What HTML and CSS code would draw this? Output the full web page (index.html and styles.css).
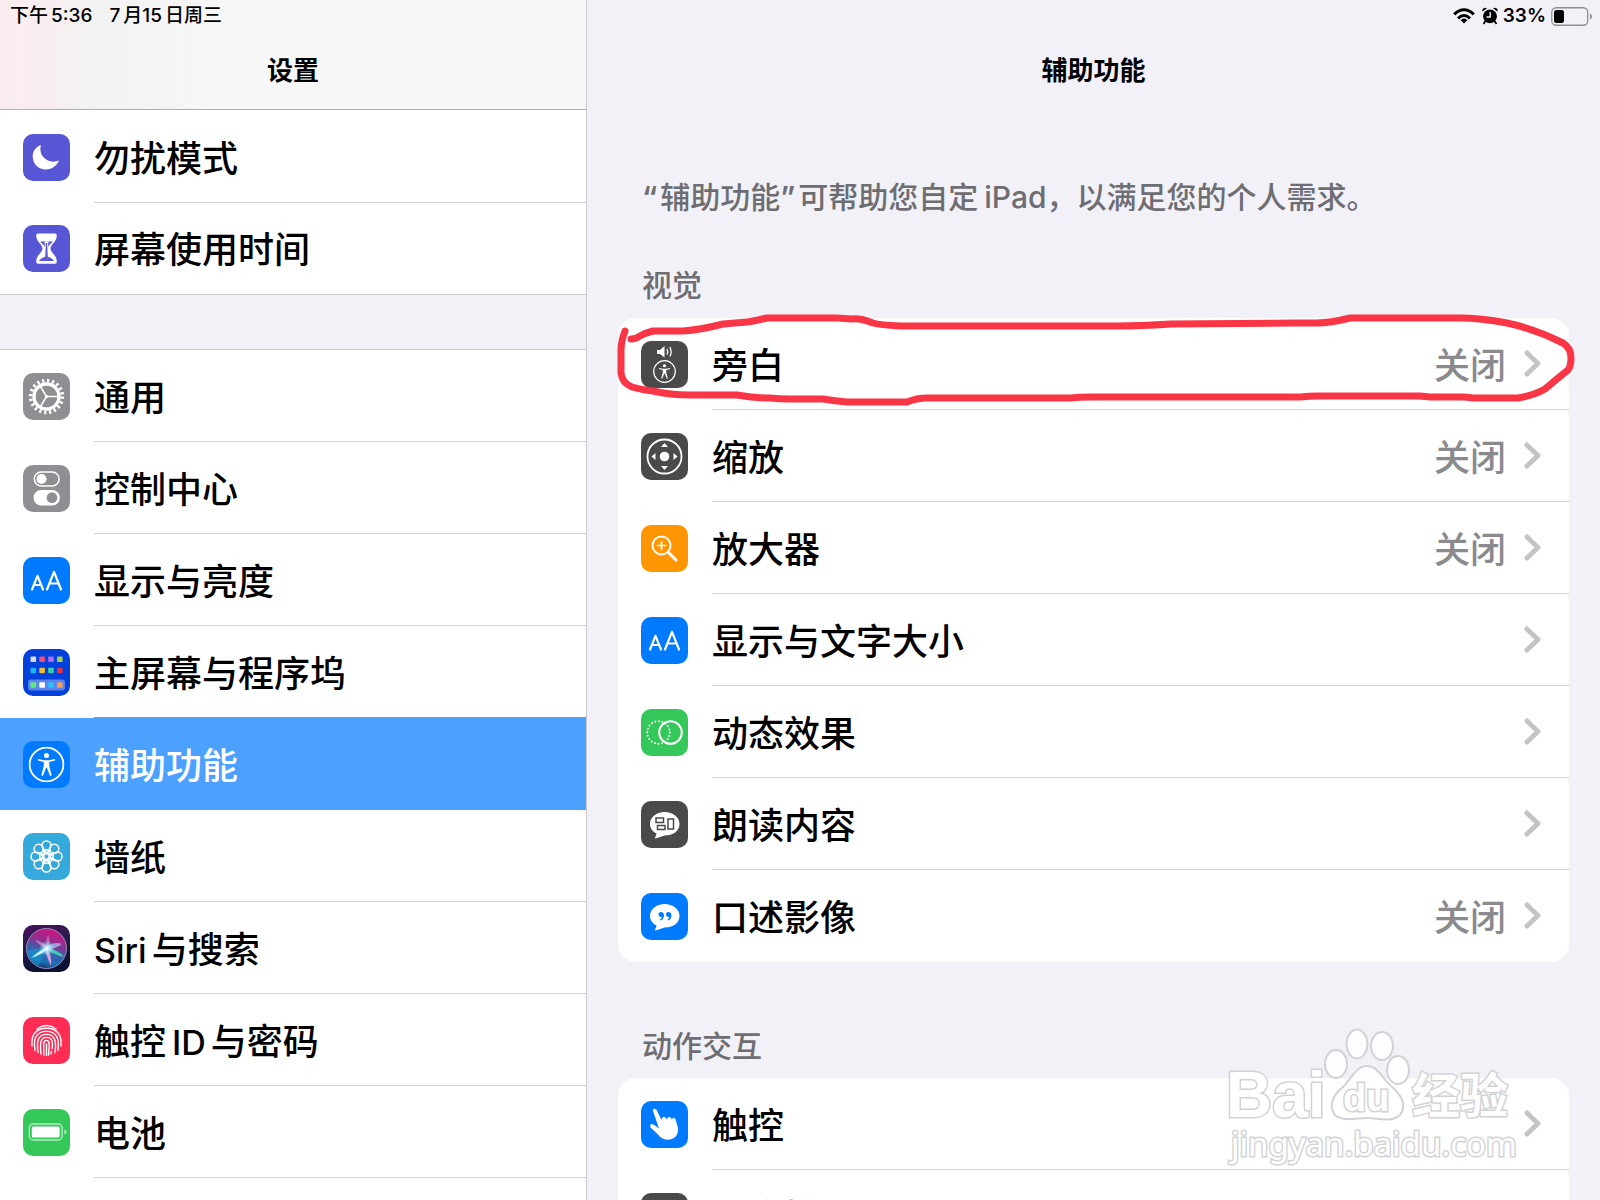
FILE: index.html
```html
<!DOCTYPE html>
<html lang="zh-CN">
<head>
<meta charset="utf-8">
<meta name="viewport" content="width=device-width, initial-scale=1">
<title>设置 - 辅助功能</title>
<link rel="stylesheet" href="styles.css">
</head>
<body>
<svg class="defs" aria-hidden="true">
  <defs>
    <symbol id="chevron" viewBox="0 0 17 27"><path d="M3 3 L14 13.500 L3 24" fill="none" stroke="currentColor" stroke-width="5" stroke-linecap="round" stroke-linejoin="round"/></symbol>
    <symbol id="person" viewBox="0 0 36 36">
      <circle cx="18" cy="18" r="16.900" fill="none" stroke="#fff" stroke-width="1.900"/>
      <circle cx="18" cy="9" r="2.500" fill="#fff"/>
      <path d="M9.500 12.600 L15.500 13.800 H20.500 L26.500 12.600 L26.700 14 L20.700 15.600 V19.500 L23.200 28.800 L21.600 29.400 L18.400 21.200 H17.600 L14.400 29.400 L12.800 28.800 L15.300 19.500 V15.600 L9.300 14 Z" fill="#fff"/>
    </symbol>
    <symbol id="aa" viewBox="0 0 47 47">
      <g fill="none" stroke="#fff" stroke-width="2.200" stroke-linecap="round" stroke-linejoin="round">
        <path d="M9 32.500 L14.500 18.800 L20 32.500 M11 28 H18"/>
        <path d="M24 32.500 L31 14.800 L38 32.500 M26.300 26.500 H35.700"/>
      </g>
    </symbol>
    <linearGradient id="siriBase" x1="0" y1="0" x2="0.300" y2="1"><stop offset="0" stop-color="#4a0f5e"/><stop offset="0.500" stop-color="#261c4c"/><stop offset="1" stop-color="#0b1230"/></linearGradient>
    <linearGradient id="siriOrb" x1="0.600" y1="0" x2="0.300" y2="1"><stop offset="0" stop-color="#d3137f"/><stop offset="0.350" stop-color="#8a3190"/><stop offset="0.550" stop-color="#3b5fa8"/><stop offset="0.800" stop-color="#1c6fb4"/><stop offset="1" stop-color="#152a5c"/></linearGradient>
    <radialGradient id="siriGlow"><stop offset="0" stop-color="#fff"/><stop offset="0.400" stop-color="#bff4ff" stop-opacity="0.700"/><stop offset="1" stop-color="#7fe0ff" stop-opacity="0"/></radialGradient>
  </defs>
</svg>

<div class="screen">
  <aside class="sidebar">
    <header class="bar bar-side">
      <div class="status"><span>下午<span class="digits">5:36</span></span><span>7<span class="digits">月</span>15<span class="digits">日周三</span></span></div>
      <h1 class="title">设置</h1>
    </header>
    <nav>
      <div class="group">
        <a class="row" href="#dnd">
          <svg class="icon indigo" viewBox="0 0 47 47"><path d="M18.500 11 C13 13 9.800 17.500 10.300 23.500 C10.800 30.500 16.500 35.800 23.500 35.500 C29.500 35.300 34.500 31.500 36.500 26.500 C33 28 28.500 28.300 24.500 26 C18.500 22.500 16.800 16.500 18.500 11 Z" transform="translate(-0.500 0)" fill="#fff"/></svg>
          <span class="cell"><span class="name">勿扰模式</span></span>
        </a>
        <a class="row" href="#screentime">
          <svg class="icon indigo" viewBox="0 0 47 47"><path d="M15 8.500 H32 Q34 8.500 33.800 11 C33.500 17 27.500 19.500 27.500 23.500 C27.500 27.500 33.500 30 33.800 36 Q34 38.700 32 38.700 H15 Q13 38.700 13.200 36 C13.500 30 19.500 27.500 19.500 23.500 C19.500 19.500 13.500 17 13.200 11 Q13 8.500 15 8.500 Z" fill="#fff"/><path d="M17.200 16.500 H29.800 C28 19 24.600 21 24.600 23.500 V31.500 C26.500 32.500 30 33.500 30.800 36 H16.200 C17 33.500 20.500 32.500 22.400 31.500 V23.500 C22.400 21 19 19 17.200 16.500 Z" fill="#5756d5"/><path d="M21.500 16.500 H25.500 L23.500 34.500 Z" fill="#fff"/><path d="M23.500 18 V33" stroke="#5756d5" stroke-width="1.500"/></svg>
          <span class="cell"><span class="name">屏幕使用时间</span></span>
        </a>
      </div>
      <div class="group">
        <a class="row" href="#general">
          <svg class="icon gray" viewBox="0 0 47 47">
            <circle cx="23.500" cy="23.500" r="15.900" fill="none" stroke="#fff" stroke-width="3.600" stroke-dasharray="2.300 2.695"/>
            <circle cx="23.500" cy="23.500" r="12.500" fill="none" stroke="#fff" stroke-width="3.400"/>
            <path d="M23.500 23.500 H35 M23.500 23.500 L17.500 13.500 M23.500 23.500 L17.500 33.500" stroke="#fff" stroke-width="1.500"/>
            <circle cx="23.500" cy="23.500" r="1.800" fill="#fff"/>
          </svg>
          <span class="cell"><span class="name">通用</span></span>
        </a>
        <a class="row" href="#control">
          <svg class="icon gray" viewBox="0 0 47 47"><rect x="11.300" y="7" width="24.800" height="14" rx="7" fill="none" stroke="#fff" stroke-width="1.500"/><circle cx="18.500" cy="14" r="5" fill="#fff"/><rect x="10.500" y="25" width="26.400" height="15.500" rx="7.750" fill="#fff"/><circle cx="29" cy="32.700" r="5.400" fill="#8e8e93"/></svg>
          <span class="cell"><span class="name">控制中心</span></span>
        </a>
        <a class="row" href="#display">
          <svg class="icon blue"><use href="#aa"/></svg>
          <span class="cell"><span class="name">显示与亮度</span></span>
        </a>
        <a class="row" href="#home">
          <svg class="icon home" viewBox="0 0 47 47">
            <rect x="5" y="30.500" width="37" height="11" rx="3" fill="#5b84e8"/>
            <g><rect x="7.500" y="7.500" width="5.600" height="5.600" rx="1" fill="#d8dbe6"/><rect x="16.300" y="7.500" width="5.600" height="5.600" rx="1" fill="#ef5176"/><rect x="25.200" y="7.500" width="5.600" height="5.600" rx="1" fill="#b26bff"/><rect x="34" y="7.500" width="5.600" height="5.600" rx="1" fill="#a5d24e"/>
            <rect x="7.500" y="18.700" width="5.600" height="5.600" rx="1" fill="#1cb4ff"/><rect x="16.300" y="18.700" width="5.600" height="5.600" rx="1" fill="#f5b92b"/><rect x="25.200" y="18.700" width="5.600" height="5.600" rx="1" fill="#35cfa6"/><rect x="34" y="18.700" width="5.600" height="5.600" rx="1" fill="#e8323c"/>
            <rect x="7.500" y="33.200" width="5.600" height="5.600" rx="1" fill="#62ea7c"/><rect x="16.300" y="33.200" width="5.600" height="5.600" rx="1" fill="#fff"/><rect x="25.200" y="33.200" width="5.600" height="5.600" rx="1" fill="#2ac4fb"/><rect x="34" y="33.200" width="5.600" height="5.600" rx="1" fill="#f99b55"/></g>
          </svg>
          <span class="cell"><span class="name">主屏幕与程序坞</span></span>
        </a>
        <a class="row selected" href="#accessibility" aria-current="page">
          <svg class="icon blue" viewBox="0 0 47 47"><use href="#person" x="5.500" y="5.500" width="36" height="36"/></svg>
          <span class="cell"><span class="name">辅助功能</span></span>
        </a>
        <a class="row" href="#wallpaper">
          <svg class="icon sky" viewBox="0 0 47 47"><g fill="none" stroke="#fff" stroke-width="1.500">
            <circle cx="23.500" cy="12.500" r="4.500"/><circle cx="31.300" cy="15.700" r="4.500"/><circle cx="34.500" cy="23.500" r="4.500"/><circle cx="31.300" cy="31.300" r="4.500"/><circle cx="23.500" cy="34.500" r="4.500"/><circle cx="15.700" cy="31.300" r="4.500"/><circle cx="12.500" cy="23.500" r="4.500"/><circle cx="15.700" cy="15.700" r="4.500"/>
            <circle cx="23.500" cy="23.500" r="3"/>
            <path d="M20 15.500 L23.500 20.500 L27 15.500 M31.700 20 L25.600 21.400 L26.800 15.500 M31.700 27 L26.500 23.500 L31.700 20 M27 31.500 L25.600 25.600 L31.700 27 M20 31.500 L23.500 26.500 L27 31.500 M15.300 27 L21.400 25.600 L20 31.500 M15.300 20 L20.500 23.500 L15.300 27 M20 15.500 L21.400 21.400 L15.300 20"/>
          </g></svg>
          <span class="cell"><span class="name">墙纸</span></span>
        </a>
        <a class="row" href="#siri">
          <svg class="icon" viewBox="0 0 47 47">
            <rect width="47" height="47" fill="url(#siriBase)"/>
            <circle cx="23.500" cy="23.500" r="20" fill="url(#siriOrb)" stroke="#9a8db8" stroke-width="1"/>
            <path d="M23 23 L4.500 25 Q6 38 16 41 Z" fill="#1599d6" opacity="0.600"/>
            <path d="M12 15 Q20 16 25 23 Q17 22 12 15 Z" fill="#e79ad8" opacity="0.600"/>
            <path d="M25 10 Q28 16 25 24 Q22 17 25 10 Z" fill="#f3a6d4" opacity="0.500"/>
            <path d="M22 23 Q31 16 39 19 Q33 24 24 24 Z" fill="#a9c7ee" opacity="0.700"/>
            <path d="M24 23 Q36 25 41 32 Q31 30 24 24 Z" fill="#43e0b4" opacity="0.800"/>
            <path d="M24 23 Q29 31 28 41 Q24 33 22 24 Z" fill="#f3a3ea" opacity="0.900"/>
            <path d="M24 22 Q17 25 8 33 Q18 30 25 24 Z" fill="#c4f7ff"/>
            <circle cx="24" cy="23.500" r="8" fill="url(#siriGlow)"/>
          </svg>
          <span class="cell"><span class="name"><span class="latin">Siri</span>与搜索</span></span>
        </a>
        <a class="row" href="#touchid">
          <svg class="icon pink" viewBox="0 0 47 47"><g fill="none" stroke="#fff" stroke-width="1.400" stroke-linecap="round">
            <path d="M14 12 Q23.500 5 33 12"/>
            <path d="M9 29 C8 19 12 11.300 23.500 11.300 C35 11.300 39 19 38 29"/>
            <path d="M12 33.500 C10 22 13 14.400 23.500 14.400 C34 14.400 36.500 22 35 33.500"/>
            <path d="M15 35.500 C13 23 16 17.400 23.500 17.400 C31 17.400 34 23 32 35.500"/>
            <path d="M18 37 C16.500 25 18 20.400 23.500 20.400 C29 20.400 30.500 25 29 31.500 M28.500 34.500 L28 37"/>
            <path d="M21 38 C20.500 27 20 23.400 23.500 23.400 C27 23.400 26.500 28 25.500 38"/>
            <path d="M23.500 27 V38.500"/>
          </g></svg>
          <span class="cell"><span class="name">触控<span class="latin latin-mid">ID</span>与密码</span></span>
        </a>
        <a class="row" href="#battery">
          <svg class="icon green" viewBox="0 0 47 47"><rect x="6.300" y="15" width="32.800" height="16" rx="4" fill="none" stroke="#fff" stroke-opacity="0.650" stroke-width="1.400"/><rect x="8.800" y="17.500" width="27.800" height="11" rx="1.500" fill="#fff"/><path d="M41.500 20.500 Q43.500 21 43.500 23 Q43.500 25 41.500 25.500 Z" fill="#fff" fill-opacity="0.700"/></svg>
          <span class="cell"><span class="name">电池</span></span>
        </a>
      </div>
    </nav>
  </aside>

  <main class="detail">
    <header class="bar">
      <div class="status status-end">
        <svg class="wifi" viewBox="0 0 22 16" role="img" aria-label="无线局域网"><g fill="none" stroke="#000" stroke-width="3"><path d="M1.200 6.300 Q11 -2.700 20.800 6.300"/><path d="M5 10.300 Q11 4.800 17 10.300"/></g><path d="M7.600 12 Q11 9 14.400 12 L11 15.600 Z"/></svg>
        <svg class="alarm" viewBox="0 0 16 18" role="img" aria-label="闹钟"><circle cx="8" cy="9.300" r="6.900"/><path d="M.500 4.600 A3 3 0 0 1 5 1.200 Z M15.500 4.600 A3 3 0 0 0 11 1.200 Z"/><path d="M3.500 14 L1.500 17 M12.500 14 L14.500 17" stroke="#000" stroke-width="1.800"/><path d="M8.200 5 V10 H4.500" fill="none" stroke="#f2f1f8" stroke-width="1.400"/></svg>
        <span>33%</span>
        <svg class="battery" viewBox="0 0 41 19" role="img" aria-label="电池电量"><rect x=".750" y=".750" width="36" height="17.500" rx="4.500" fill="none" stroke="#8f8e94" stroke-width="1.300"/><rect x="3" y="3" width="10" height="13" rx="2.500"/><path d="M39 6.500 Q41 7.500 41 9.500 Q41 11.500 39 12.500 Z" fill="#8f8e94"/></svg>
      </div>
      <h2 class="title">辅助功能</h2>
    </header>

    <p class="intro"><span class="quote">“</span>辅助功能<span class="quote">”</span>可帮助您自定<span class="latin-mid">iPad</span>，以满足您的个人需求。</p>

    <section>
      <h3 class="caption">视觉</h3>
      <div class="card">
        <a class="row" href="#voiceover">
          <svg class="icon dark" viewBox="0 0 47 47"><path d="M16 9 H19 L23.500 5 V16.500 L19 13 H16 Z" fill="#fff"/><path d="M26 8 Q27.500 10.700 26 13.500 M28.800 6 Q31.500 10.700 28.800 15.500" fill="none" stroke="#fff" stroke-width="1.300"/><use href="#person" x="12" y="19" width="23" height="23"/></svg>
          <span class="cell"><span class="name">旁白</span><span class="value">关闭</span><svg class="chevron"><use href="#chevron"/></svg></span>
        </a>
        <a class="row" href="#zoom">
          <svg class="icon dark" viewBox="0 0 47 47"><circle cx="23.500" cy="23.500" r="17" fill="none" stroke="#fff" stroke-width="1.800"/><circle cx="23.500" cy="23.500" r="4.800" fill="#fff"/><path d="M23.500 10 L27 14 H20 Z M23.500 37 L27 33 H20 Z M10.500 23.500 L14.500 20 V27 Z M36.500 23.500 L32.500 20 V27 Z" fill="#fff"/></svg>
          <span class="cell"><span class="name">缩放</span><span class="value">关闭</span><svg class="chevron"><use href="#chevron"/></svg></span>
        </a>
        <a class="row" href="#magnifier">
          <svg class="icon orange" viewBox="0 0 47 47"><g fill="none" stroke="#fff" stroke-linecap="round"><circle cx="20.500" cy="20.500" r="9" stroke-width="2"/><path d="M20.500 16.500 V24.500 M16.500 20.500 H24.500" stroke-width="1.700"/><path d="M27.500 27.500 L35 35" stroke-width="3"/></g></svg>
          <span class="cell"><span class="name">放大器</span><span class="value">关闭</span><svg class="chevron"><use href="#chevron"/></svg></span>
        </a>
        <a class="row" href="#text">
          <svg class="icon blue"><use href="#aa"/></svg>
          <span class="cell"><span class="name">显示与文字大小</span><svg class="chevron"><use href="#chevron"/></svg></span>
        </a>
        <a class="row" href="#motion">
          <svg class="icon green" viewBox="0 0 47 47"><g fill="none" stroke="#fff"><circle cx="17.500" cy="23.500" r="11.300" stroke-width="2" stroke-dasharray="0.010 3.540" stroke-linecap="round"/><circle cx="29.500" cy="23.500" r="11.300" stroke-width="2"/></g></svg>
          <span class="cell"><span class="name">动态效果</span><svg class="chevron"><use href="#chevron"/></svg></span>
        </a>
        <a class="row" href="#spoken">
          <svg class="icon dark" viewBox="0 0 47 47"><path d="M23.500 11 C32 11 38.500 16 38.500 23 C38.500 30 32 34.500 23.500 34.500 Q18 36.500 14.500 37.500 Q13.300 37 14.500 35.500 Q15.500 34 15.500 32.500 C11.500 30.500 9 27 9 23 C9 16 15.500 11 23.500 11 Z" fill="#fff"/><path d="M15 17 H22.500 V21.500 H15 Z M16.500 24.500 H24 V28.500 H16.500 Z M27 18 H32.500 V28 H27 Z" fill="none" stroke="#4a4a4a" stroke-width="1.500"/></svg>
          <span class="cell"><span class="name">朗读内容</span><svg class="chevron"><use href="#chevron"/></svg></span>
        </a>
        <a class="row" href="#description">
          <svg class="icon blue" viewBox="0 0 47 47"><path d="M23.500 11 C32 11 38.500 16 38.500 23 C38.500 30 32 34.500 23.500 34.500 Q18 36.500 14.500 37.500 Q13.300 37 14.500 35.500 Q15.500 34 15.500 32.500 C11.500 30.500 9 27 9 23 C9 16 15.500 11 23.500 11 Z" fill="#fff"/><path d="M23 22 C23 18.500 17.500 18 17.500 21.500 C17.500 23.500 19.500 24.300 21 23.700 Q20.800 25.500 19 26.500 L19.500 27.500 Q23 26.300 23 22 Z M30.500 22 C30.500 18.500 25 18 25 21.500 C25 23.500 27 24.300 28.500 23.700 Q28.300 25.500 26.500 26.500 L27 27.500 Q30.500 26.300 30.500 22 Z" fill="#007aff"/></svg>
          <span class="cell"><span class="name">口述影像</span><span class="value">关闭</span><svg class="chevron"><use href="#chevron"/></svg></span>
        </a>
        <svg class="marker" viewBox="618 318 951 92" preserveAspectRatio="none" aria-hidden="true"><path d="M625 331 Q621 341 621 351 V373 Q622 383 632 387 Q642 390 653 391 Q670 395 690 395 H737 Q755 398 770 398 Q780 399 790 399 H823 Q835 401 847 402 H907 Q917 398 927 398 H1070 Q1080 397 1090 397 H1300 Q1310 396 1317 396 H1420 L1430 397 H1465 L1473 398 H1518 Q1535 395 1545 389 Q1558 378 1568 370 Q1571 366 1571 358 Q1571 348 1563 343 Q1535 329 1507 323 Q1480 318 1460 318 H1350 Q1330 323 1317 323 H1295 L1171 324 Q1140 326 1117 326 H900 Q880 325 873 323 Q860 318 852 319 L837 318 H767 Q750 322 747 322 L723 324 Q700 330 683 331 H653 Q645 333 640 336 Q636 339 631 339"/></svg>
      </div>
    </section>

    <section>
      <h3 class="caption">动作交互</h3>
      <div class="card">
        <a class="row" href="#touch">
          <svg class="icon blue" viewBox="0 0 47 47"><path d="M12 10 Q11.500 7.500 13.800 7.700 Q15.500 8 16.300 10.500 L20.500 19 Q20.800 15.500 23.500 16 Q26 16.500 25.800 19.500 Q26.300 15.500 29 16 Q31 16.500 30.800 19.500 Q31 16.500 33 16.800 Q35 17.500 35.300 21 L37 27 Q37.500 34 33 37 Q28 40 22.500 38 Q19 36.500 16 32.500 L9.500 26.500 Q8.500 24 10.500 23 Q12 22.800 14 24.500 L18 27.500 Z" fill="#fff"/></svg>
          <span class="cell"><span class="name">触控</span><svg class="chevron"><use href="#chevron"/></svg></span>
        </a>
        <a class="row" href="#switch">
          <svg class="icon dark" viewBox="0 0 47 47"><rect x="8" y="12" width="13" height="22" rx="2" fill="#fff"/><rect x="25" y="12" width="13" height="22" rx="2" fill="#fff"/></svg>
          <span class="cell"><span class="name">切换控制</span><svg class="chevron"><use href="#chevron"/></svg></span>
        </a>
      </div>
    </section>
  </main>

  <svg class="watermark" viewBox="0 0 300 150" role="img" aria-label="Baidu 经验 jingyan.baidu.com">
    <g class="wm-shape">
      <ellipse cx="108" cy="34" rx="11" ry="14"/>
      <ellipse cx="129" cy="14" rx="10.500" ry="14.500"/>
      <ellipse cx="154" cy="16" rx="11" ry="14"/>
      <ellipse cx="170" cy="40" rx="11" ry="14"/>
      <path d="M139 36 C150 36 154 48 163 56 C174 65 179 76 172 85 C163 93 150 88 139 88 C128 88 115 92 107 85 C100 76 105 65 115 57 C124 48 128 36 139 36 Z"/>
    </g>
    <text class="wm-bai" x="-2" y="87">Bai</text>
    <text class="wm-du" x="115" y="81">du</text>
    <text class="wm-cjk" x="184" y="83">经验</text>
    <text class="wm-url" x="3" y="126">jingyan.baidu.com</text>
  </svg>
</div>
</body>
</html>
```
FILE: styles.css
```css
* { box-sizing: border-box; }

body {
  margin: 0;
  background: #f2f1f8;
  color: #000;
  font-family: Inter, "Noto Sans CJK SC", sans-serif;
  font-size: 36px;
  font-weight: 500;
}

a { color: inherit; text-decoration: none; }
h1, h2, h3, p { margin: 0; }

.defs { position: absolute; width: 0; height: 0; }

.screen {
  position: relative;
  display: grid;
  grid-template-columns: minmax(0, 587fr) minmax(0, 1013fr);
  height: 100vh;
  overflow: hidden;
}

.sidebar {
  background: #fff;
  border-right: 1px solid #c9c8cd;
  overflow: hidden;
}

.detail { overflow: hidden; }

/* Top bars */
.bar { height: 110px; }

.bar-side {
  background: linear-gradient(90deg, #fbedef 0, #f8eeef 50px, #f3f2f2 90px, #f4f4f4 140px, #f7f7f7 220px);
  border-bottom: 1px solid #b0b0b2;
}

.status {
  display: flex;
  align-items: center;
  gap: 17px;
  height: 32px;
  padding: 0 10px;
  font-size: 19px;
  font-weight: 600;
  line-height: 26px;
}

.status:not(.status-end) { font-weight: 500; }
.digits { margin-left: 3px; }
.status-end { justify-content: flex-end; gap: 5px; padding-right: 8px; }
.wifi { width: 22px; height: 16px; margin-right: 2px; }
.alarm { width: 16px; height: 18px; }
.battery { width: 41px; height: 19px; }

.title {
  font-size: 26px;
  font-weight: 600;
  line-height: 40px;
  padding-top: 19px;
  text-align: center;
}

/* Rows */
.group { padding-top: 1px; }

.group + .group {
  border-top: 54px solid #f2f1f8;
  box-shadow: inset 0 1px 0 #c9c8cd;
}

.row {
  display: flex;
  align-items: center;
  gap: 24px;
  height: 92px;
  padding-left: 23px;
}

.cell {
  flex: 1;
  display: flex;
  align-items: center;
  height: 92px;
  border-bottom: 1px solid #d3d3d5;
}

.name { flex: 1; white-space: nowrap; }
.name, .value { padding-bottom: 2px; }
.group:first-child .row:last-child { border-bottom: 1px solid #c9c8cd; }
.group:first-child .row:last-child .cell,
.card .row:nth-of-type(7) .cell { border-bottom-color: transparent; }

.selected { background: #4ca1ff; color: #fff; }
.selected .cell { border-bottom-color: transparent; }
.row:has(+ .selected) .cell { border-bottom-color: #4ca1ff; }

.latin { margin-right: 5px; font-size: 34px; }
.latin-mid { margin-left: 6px; }

.icon { flex: none; width: 47px; height: 47px; border-radius: 10px; }
.indigo { background: #5756d5; }
.gray { background: #8e8e93; }
.blue { background: #007aff; }
.home { background: #0340dc; }
.sky { background: #34aadc; }
.pink { background: #ff2d55; }
.green { background: #34c759; }
.dark { background: #4a4a4a; }
.orange { background: #ff9500; }

/* Detail pane */
.intro, .caption {
  padding: 0 24px;
  margin: 0 31px;
  color: #6d6d72;
  font-size: 30px;
  font-weight: 500;
  line-height: 40px;
}

.intro { margin-top: 67px; }
.quote { margin-right: 3px; font-weight: 600; }
.caption { margin-top: 48px; margin-bottom: 13px; }
section + section .caption { margin-top: 64px; margin-bottom: 12px; }

.card {
  position: relative;
  margin: 0 31px;
  background: #fff;
  border-radius: 18px;
}

.card .cell { padding-right: 28px; }
.value { color: #8a8a8e; }
.chevron { flex: none; width: 17px; height: 27px; margin-left: 18px; color: #c4c4c7; }

/* Hand-drawn highlight round the first row */
.marker {
  position: absolute;
  top: 0;
  left: 0;
  width: 100%;
  height: 92px;
  overflow: visible;
  pointer-events: none;
}

.marker path {
  fill: none;
  stroke: #fa3545;
  stroke-width: 7px;
  stroke-linecap: round;
  stroke-linejoin: round;
  vector-effect: non-scaling-stroke;
}

/* Watermark */
.watermark {
  position: absolute;
  right: 72px;
  bottom: 20px;
  width: 300px;
  height: 150px;
  overflow: visible;
  pointer-events: none;
  fill: #fff;
  stroke: #d2d2d6;
  stroke-width: 2px;
}

.watermark text { paint-order: stroke; stroke-width: 3px; }
.wm-shape { fill-opacity: 0.8; }
.wm-bai { font: 700 64px "Liberation Sans", sans-serif; }
.wm-du { font: 700 38px "Liberation Sans", sans-serif; }
.wm-cjk { font: 700 48px "Noto Sans CJK SC", sans-serif; }
.wm-url { font: 400 33px "Noto Sans", sans-serif; }
```
